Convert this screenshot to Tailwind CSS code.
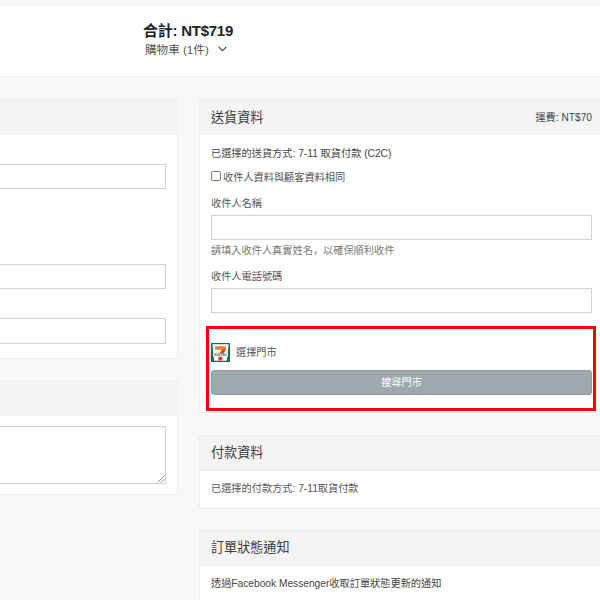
<!DOCTYPE html>
<html lang="zh-Hant">
<head>
<meta charset="utf-8">
<title>結帳</title>
<script src="https://cdn.jsdelivr.net/npm/@tailwindcss/browser@4"></script>
</head>
<body class="w-[600px] h-[600px] overflow-hidden bg-[#f8f8f8] font-['Liberation_Sans','Noto_Sans_CJK_TC',sans-serif] text-[10.2px] leading-[14px] text-[#555] whitespace-nowrap">
<header class="mt-[5px] h-[72px] bg-white border-y border-[#f0f0f0] pl-[143px] pt-[15px]">
  <h1 class="text-[15px] leading-[20px] font-bold text-[#222] tracking-[-0.25px]">合計: NT$719</h1>
  <div class="flex items-center pl-[2px] h-[18px] text-[11.6px]">
    <span>購物車 (1件)</span>
    <svg class="ml-[9px] -mt-[3px] w-[9px] h-[6px]" viewBox="0 0 9 6" fill="none" stroke="#444" stroke-width="1.2"><path d="M.7.8 4.5 4.6 8.3.8"/></svg>
  </div>
</header>
<main class="flex gap-[21px] pt-[22px]">
  <div class="w-[178px] shrink-0 flex flex-col gap-[21px]">
    <section class="h-[260px] bg-white border border-l-0 border-[#efefef]">
      <div class="h-[35px] bg-[#f4f4f4]"></div>
      <div class="pr-[11px] pt-[29px]">
        <div class="h-[25px] bg-white border border-l-0 border-[#d2d2d2]"></div>
        <div class="mt-[75px] h-[25px] bg-white border border-l-0 border-[#d2d2d2]"></div>
        <div class="mt-[29px] h-[26px] bg-white border border-l-0 border-[#d2d2d2]"></div>
      </div>
    </section>
    <section class="h-[115px] bg-white border border-l-0 border-[#efefef]">
      <div class="h-[35px] bg-[#f4f4f4]"></div>
      <div class="pr-[11px] pt-[10px]">
        <div class="h-[58px] border border-l-0 border-[#d2d2d2] flex items-end justify-end">
          <svg class="w-[8px] h-[8px]" viewBox="0 0 8 8" stroke="#777" stroke-width=".8"><path d="M.5 7.5l7-7M4 7.5 7.5 4"/></svg>
        </div>
      </div>
    </section>
  </div>
  <div class="w-[401px] shrink-0 flex flex-col">
    <section class="h-[314px] bg-white border border-r-0 border-[#efefef]">
      <div class="h-[35px] bg-[#f4f4f4] flex items-center justify-between pl-[11px] pr-[8px]">
        <h2 class="text-[13.1px] text-[#3c3c3c]">送貨資料</h2>
        <span class="text-[#444]">運費: NT$70</span>
      </div>
      <div class="pl-[11px] pr-[8px] pt-[12px] flex flex-col">
        <p class="h-[14px] text-[#444]">已選擇的送貨方式: 7-11 取貨付款 (C2C)</p>
        <label class="mt-[10px] h-[14px] flex items-center"><span class="w-[10px] h-[10px] mr-[2px] -mt-[4px] border border-[#777] rounded-[2px] bg-white"></span>收件人資料與顧客資料相同</label>
        <p class="mt-[12px] h-[14px]">收件人名稱</p>
        <div class="mt-[4px] h-[25px] border border-[#d2d2d2]"></div>
        <p class="mt-[4px] h-[14px] text-[#777]">請填入收件人真實姓名<span lang="zh-Hans" class="font-['Noto_Sans_CJK_SC',sans-serif] leading-none">，</span>以確保順利收件</p>
        <p class="mt-[12px] h-[14px]">收件人電話號碼</p>
        <div class="mt-[4px] h-[25px] border border-[#d2d2d2]"></div>
      </div>
      <div class="ml-[6px] mt-[13px] w-[390px] h-[85px] border-[3px] border-[#fe0000] pl-[2px] pr-[1px] pt-[14px] relative bg-white">
        <div class="flex items-center h-[19px]">
          <svg class="w-[19px] h-[19px] mr-[6px]" viewBox="0 0 19 19">
            <path fill="#176b4e" d="M0 0h19v19H0z"/>
            <path fill="#fff" d="M1.3 1.3h16.4L15.8 17.7H3.2z"/>
            <path fill="#f47b32" d="M4 3.3h10.9v3.5l-1.5 1.6H9.6l1.3-1.7H4z"/>
            <path fill="#e93829" d="M10.9 6.7h4l-2.9 4H8.2zM7.4 13.5h3.9v3.9H7.4z"/>
            <path fill="#fff" d="M2 10.5h15v3H2z"/>
            <text x="3.2" y="13.1" font-size="3.2" font-weight="700" textLength="12.6" lengthAdjust="spacingAndGlyphs" fill="#176b4e">ELEVEn</text>
          </svg>
          <span>選擇門市</span>
        </div>
        <div class="mt-[8px] h-[25px] rounded-[3px] bg-[#9ea9ae] border border-[#929da2] text-white flex items-center justify-center">搜尋門市</div>
      </div>
    </section>
    <section class="mt-[22px] h-[74px] bg-white border border-r-0 border-[#ececec]">
      <div class="h-[35px] bg-[#f4f4f4] border-b border-[#ececec] flex items-center pl-[11px]"><h2 class="text-[13.1px] text-[#3c3c3c]">付款資料</h2></div>
      <p class="pl-[11px] pt-[11px]">已選擇的付款方式: 7-11取貨付款</p>
    </section>
    <section class="mt-[21px] h-[90px] bg-white border border-r-0 border-[#ececec]">
      <div class="h-[35px] bg-[#f4f4f4] border-b border-[#ececec] flex items-center pl-[11px]"><h2 class="text-[13.1px] text-[#3c3c3c]">訂單狀態通知</h2></div>
      <p class="pl-[11px] pt-[11px] text-[#444]">透過Facebook Messenger收取訂單狀態更新的通知</p>
    </section>
  </div>
</main>
</body>
</html>
